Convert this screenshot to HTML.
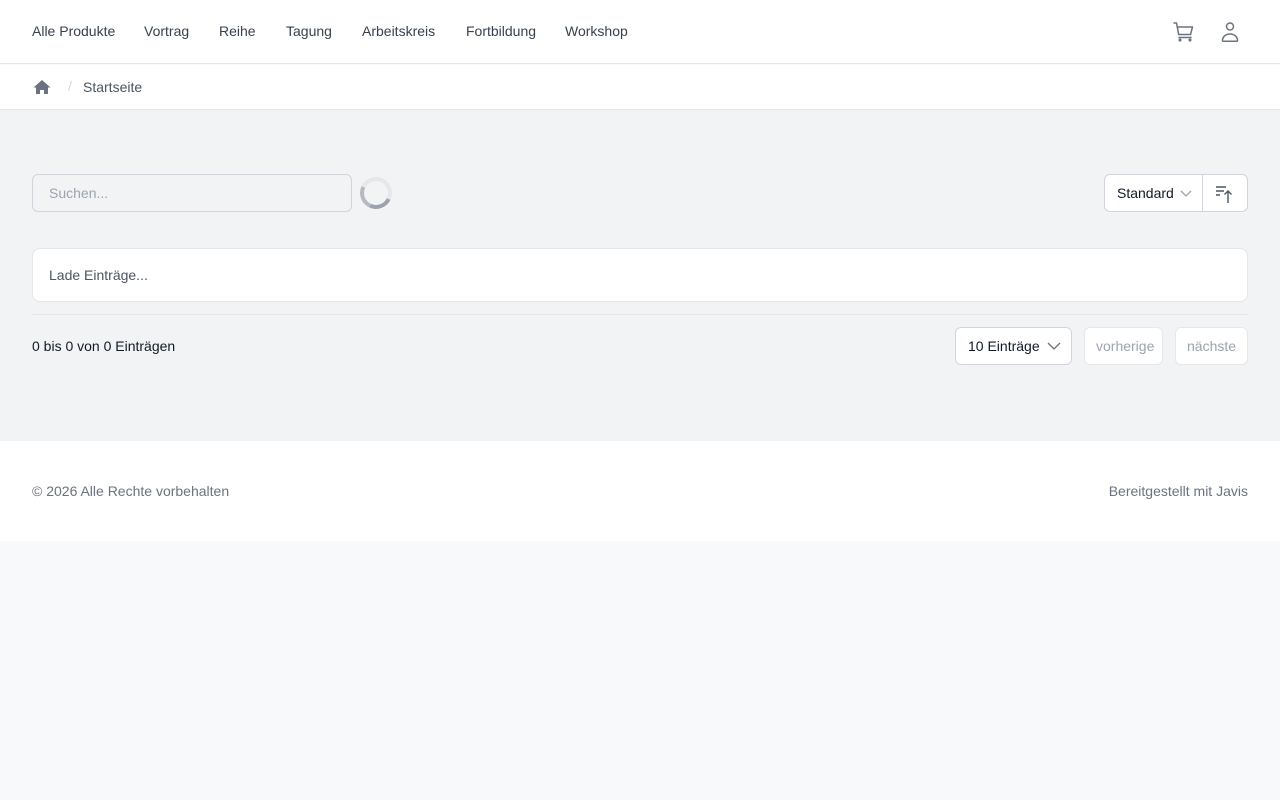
<!DOCTYPE html>
<html><head><meta charset="utf-8"><style>
*{box-sizing:border-box;margin:0;padding:0}
body{width:1280px;height:800px;background:#f8f9fb;font-family:"Liberation Sans",sans-serif;font-size:14px;color:#374151;position:relative;overflow:hidden}
.abs{position:absolute}
.nav{top:0;left:0;width:1280px;height:64px;background:#fff;border-bottom:1px solid #e5e7eb}
.nav span{position:absolute;top:23px;font-size:14px;color:#374151}
.bc{top:65px;left:0;width:1280px;height:45px;background:#fff;border-bottom:1px solid #e5e7eb}
.main{top:110px;left:0;width:1280px;height:331px;background:#f2f3f5}
.foot{top:441px;left:0;width:1280px;height:100px;background:#fff}
</style></head><body>
<div class="abs nav">
<span style="left:32px">Alle Produkte</span>
<span style="left:144px">Vortrag</span>
<span style="left:219px">Reihe</span>
<span style="left:286px">Tagung</span>
<span style="left:362px">Arbeitskreis</span>
<span style="left:466px">Fortbildung</span>
<span style="left:565px">Workshop</span>
<svg class="abs" style="left:1172px;top:20px" width="24" height="24" viewBox="0 0 24 24" fill="none" stroke="#6b7280" stroke-width="1.5" stroke-linecap="round" stroke-linejoin="round"><path d="M2 3h2.5l2.2 11.5h11.8L20.5 7H5.5M7 17.5h12"/><circle cx="8" cy="20" r="0.8" fill="#6b7280"/><circle cx="18" cy="20" r="0.8" fill="#6b7280"/></svg>
<svg class="abs" style="left:1218px;top:20px" width="24" height="24" viewBox="0 0 24 24" fill="none" stroke="#6b7280" stroke-width="1.5"><circle cx="12" cy="6.5" r="3.5"/><path d="M4.5 20.5c0-4 3.5-6.5 7.5-6.5s7.5 2.5 7.5 6.5c0 .6-.4.8-1 .8H5.5c-.6 0-1-.2-1-.8z"/></svg>
</div>
<div class="abs bc">
<svg class="abs" style="left:33px;top:14px" width="18" height="16" viewBox="0 0 18 16" fill="#6b7280"><path d="M9 1L0.5 8.5h2.5V15h4v-4h4v4h4V8.5h2.5z"/></svg>
<span class="abs" style="left:68px;top:13px;color:#d1d5db">/</span>
<span class="abs" style="left:83px;top:14px;color:#4b5563">Startseite</span>
</div>
<div class="abs main">
<div class="abs" style="left:32px;top:64px;width:320px;height:38px;border:1px solid #d1d5db;border-radius:6px;background:#f2f3f5;padding:10px 16px;color:#9ca3af">Suchen...</div>
<div class="abs" style="left:360px;top:67px;width:32px;height:32px;border:4px solid #e5e7eb;border-bottom-color:#9ca3af;border-left-color:#b5bac2;border-radius:50%;transform:rotate(-20deg)"></div>
<div class="abs" style="left:1104px;top:64px;width:144px;height:38px;border:1px solid #d1d5db;border-radius:6px;background:#fff"></div>
<div class="abs" style="left:1202px;top:65px;width:1px;height:36px;background:#d1d5db"></div>
<span class="abs" style="left:1117px;top:75px;color:#111827">Standard</span>
<svg class="abs" style="left:1179px;top:78px" width="14" height="10" viewBox="0 0 14 10" fill="none" stroke="#9ca3af" stroke-width="1.3"><path d="M2 3l5 5 5-5"/></svg>
<svg class="abs" style="left:1214px;top:73px" width="22" height="22" viewBox="0 0 22 22" fill="none" stroke="#4b5563" stroke-width="1.4"><path d="M2 4h10M2 8h8M2 12h4M14 20V8M10.5 11.5L14 8l3.5 3.5"/></svg>
<div class="abs" style="left:32px;top:138px;width:1216px;height:54px;background:#fff;border:1px solid #e5e7eb;border-radius:8px;padding:18px 16px;color:#4b5563">Lade Einträge...</div>
<div class="abs" style="left:32px;top:204px;width:1216px;height:1px;background:#e5e7eb"></div>
<span class="abs" style="left:32px;top:228px;color:#111827">0 bis 0 von 0 Einträgen</span>
<div class="abs" style="left:955px;top:217px;width:117px;height:38px;border:1px solid #d1d5db;border-radius:6px;background:#fff;padding:10px 12px;color:#111827">10 Einträge</div>
<svg class="abs" style="left:1046px;top:231px" width="16" height="10" viewBox="0 0 16 10" fill="none" stroke="#6b7280" stroke-width="1.3"><path d="M2 2l6 6 6-6"/></svg>
<div class="abs" style="left:1084px;top:217px;width:79px;height:38px;border:1px solid #e5e7eb;border-radius:6px;background:#fff;padding:10px 11px;color:#9ca3af">vorherige</div>
<div class="abs" style="left:1175px;top:217px;width:73px;height:38px;border:1px solid #e5e7eb;border-radius:6px;background:#fff;padding:10px 11px;color:#9ca3af">nächste</div>
</div>
<div class="abs foot">
<span class="abs" style="left:32px;top:42px;color:#6b7280">© 2026 Alle Rechte vorbehalten</span>
<span class="abs" style="right:32px;top:42px;color:#6b7280">Bereitgestellt mit Javis</span>
</div>
</body></html>
